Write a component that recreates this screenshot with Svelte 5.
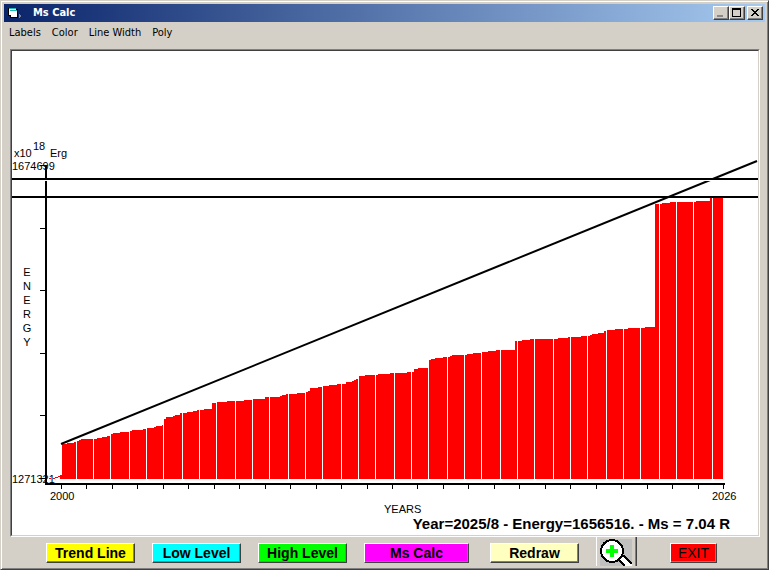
<script>
  const baseline = 479;

  /** Step outline of the bars: left edge and top of every level. */
  const levels = [
    [62, 444], [67, 443], [74, 442], [77, 441], [79, 440], [81, 439], [97, 438], [102, 437],
    [107, 436], [110, 434], [113, 433], [120, 432], [129, 431], [132, 430], [143, 429],
    [146, 428], [154, 427], [156, 426], [162, 425], [164, 419], [166, 417], [173, 416],
    [175, 415], [180, 413], [187, 412], [193, 411], [197, 410], [204, 409], [212, 403],
    [217, 402], [227, 401], [244, 400], [253, 399], [265, 397], [280, 396], [282, 395],
    [286, 394], [297, 393], [306, 392], [308, 391], [310, 388], [318, 387], [322, 386],
    [329, 385], [337, 384], [346, 382], [352, 381], [354, 380], [356, 379], [359, 376],
    [365, 375], [378, 374], [390, 373], [407, 372], [414, 369], [418, 368], [429, 360],
    [431, 359], [435, 358], [443, 357], [450, 356], [452, 355], [467, 354], [473, 353],
    [482, 352], [488, 351], [496, 350], [515, 341], [522, 340], [530, 339], [558, 338],
    [568, 337], [581, 336], [590, 335], [592, 334], [598, 333], [604, 331], [606, 330],
    [615, 329], [628, 328], [645, 327], [655, 204], [662, 203], [670, 202], [696, 201],
    [710, 197]
  ];
  const lastX = 723;

  const steps = levels.map(([x, y], i) => ({
    x,
    y,
    width: (levels[i + 1]?.[0] ?? lastX) - x
  }));

  const gaps = [];
  for (let x = 76; x < lastX; x += 53) {
    gaps.push(x, x + 17, x + 34);
  }

  const yearTicks = Array.from({ length: 27 }, (_, i) => Math.round(61 + (i * 662) / 26));
  const energyTicks = [165, 228, 290, 353, 415, 478];
  const menu = ['Labels', 'Color', 'Line Width', 'Poly'];
</script>

<main class="window">
  <header class="title-bar">
    <svg class="app-icon" viewBox="0 0 14 12" aria-hidden="true" shape-rendering="crispEdges">
      <path d="M0 1h8v1h2v9H2V9H0z" fill="#000" />
      <path d="M1 2h7v6H1z" fill="#fff" />
      <path d="M1 1h7v1H1z" fill="#20b8b0" />
      <path d="M2 4h7v6H3z" fill="#fff" />
      <path d="M2 3h7v1H2z" fill="#20b8b0" />
      <path d="M11 7l2 2-2 2z" fill="#78818c" />
    </svg>
    <h1>Ms Calc</h1>
    <div class="window-buttons">
      <button type="button" aria-label="Minimize">
        <svg viewBox="0 0 12 10"><path d="M2 7h6v2H2z" fill="#888" /></svg>
      </button>
      <button type="button" aria-label="Maximize">
        <svg viewBox="0 0 12 10"><path d="M1 0h9v9H1zM2 2v6h7V2z" fill-rule="evenodd" /></svg>
      </button>
      <button type="button" class="close" aria-label="Close">
        <svg viewBox="0 0 12 10">
          <path d="M2 1h2v1h1v1h2V2h1V1h2v1H9v1H8v1H7v1h1v1h1v1h1v1H8V7H7V6H5v1H4v1H2V7h1V6h1V5h1V4H4V3H3V2H2z" />
        </svg>
      </button>
    </div>
  </header>

  <nav class="menu">
    {#each menu as item}
      <button type="button">{item}</button>
    {/each}
  </nav>

  <div class="plot">
    <svg viewBox="12 51 746 484" role="img" aria-label="Energy by year">
      <g shape-rendering="crispEdges">
        <g class="bars">
          {#each steps as step}
            <rect x={step.x} y={step.y} width={step.width} height={baseline - step.y} />
          {/each}
          <path d="M49 478h2v1h-2zM53 478h2v1h-2zM55 477h3v1h-3zM58 476h2v1h-2zM60 475h2v4h-2z" />
        </g>
        {#each gaps as x}
          <rect class="gap" {x} y="190" width="1" height="289" />
        {/each}
        <path class="axis" d="M46 165V485M45 484H725" />
        {#each energyTicks as y}
          <rect x="40" {y} width="5" height="1" />
        {/each}
        {#each yearTicks as x}
          <rect {x} y="485" width="1" height="4" />
        {/each}
      </g>
      <path class="axis" d="M61 444L757 161" />
      <g shape-rendering="crispEdges">
        <rect class="gap" x="12" y="180" width="746" height="1" />
        <path class="axis" d="M12 179H758M12 197H758" />
      </g>
      <g class="small">
        <text x="14" y="157">x10</text>
        <text x="33" y="150">18</text>
        <text x="50" y="157">Erg</text>
        <text x="12" y="170">1674699</text>
        <text x="12" y="483">1271321</text>
        <text x="50" y="500">2000</text>
        <text x="712" y="500">2026</text>
        <text x="384" y="513">YEARS</text>
        {#each 'ENERGY' as letter, i}
          <text class="vertical" x="27" y={276 + i * 14}>{letter}</text>
        {/each}
      </g>
      <text class="reading" x="730" y="529">Year=2025/8 - Energy=1656516. - Ms = 7.04 R</text>
    </svg>
  </div>

  <footer class="toolbar">
    <button type="button" class="yellow">Trend Line</button>
    <button type="button" class="cyan">Low Level</button>
    <button type="button" class="green">High Level</button>
    <button type="button" class="magenta">Ms Calc</button>
    <button type="button" class="cream">Redraw</button>
    <button type="button" class="zoom" aria-label="Zoom in">
      <svg viewBox="0 0 32 27" shape-rendering="crispEdges">
        <path d="M0 0h32v27H0z" fill="#c0c0c0" />
        <path d="M17 20l6-4 9 9v2h-7z" fill="#fff" />
        <path d="M21 17h3l8 8M18 20l7 7" fill="none" stroke="#000" stroke-width="2" />
        <circle cx="12" cy="12" r="11" fill="#fff" stroke="#000" stroke-width="2" />
        <path d="M10 6h4v4h4v4h-4v4h-4v-4H6v-4h4z" fill="#0f0" />
      </svg>
    </button>
    <button type="button" class="exit">EXIT</button>
  </footer>
</main>

<style>
  :global(body) {
    margin: 0;
    background: #d4d0c8;
  }

  .window {
    padding: 3px;
    border: 1px solid;
    border-color: #d4d0c8 #404040 #404040 #d4d0c8;
    background: #d4d0c8;
    box-shadow: inset 1px 1px #fff, inset -1px -1px #808080;
    color: #000;
    font-family: "DejaVu Sans Condensed", "DejaVu Sans", sans-serif;
    font-size: 11px;
  }

  button {
    margin: 0;
    padding: 0;
    border: 1px solid;
    border-color: #fff #404040 #404040 #fff;
    border-radius: 0;
    background: #d4d0c8;
    color: #000;
    font: inherit;
  }

  .title-bar {
    display: flex;
    align-items: center;
    height: 18px;
    padding: 0 2px 0 4px;
    background: linear-gradient(to right, #0a246a, #a6caf0);
  }

  .app-icon {
    width: 14px;
    height: 12px;
  }

  h1 {
    flex: 1;
    margin: 0 0 0 11px;
    color: #fff;
    font-size: 11px;
    line-height: 18px;
  }

  .window-buttons {
    display: flex;
  }

  .window-buttons button {
    width: 16px;
    height: 14px;
    box-shadow: inset -1px -1px #808080;
  }

  .window-buttons .close {
    margin-left: 2px;
  }

  .window-buttons svg {
    display: block;
    width: 12px;
    height: 10px;
    margin: 1px;
    shape-rendering: crispEdges;
  }

  .menu {
    display: flex;
    gap: 11px;
    height: 22px;
    padding: 0 5px 5px;
  }

  .menu button {
    border: 0;
    line-height: 22px;
  }

  .plot {
    margin: 0 5px 0 6px;
    border: 1px solid;
    border-color: #808080 #fff #fff #808080;
  }

  .plot svg {
    display: block;
    width: 100%;
    box-sizing: border-box;
    border: 1px solid;
    border-color: #404040 #d4d0c8 #d4d0c8 #404040;
    background: #fff;
  }

  .bars {
    fill: #f00;
  }

  .gap {
    fill: #fff;
  }

  .axis {
    fill: none;
    stroke: #000;
    stroke-width: 2px;
  }

  .small {
    font-family: "Liberation Sans", Arial, sans-serif;
    font-size: 11px;
  }

  .vertical {
    text-anchor: middle;
  }

  .reading {
    font-family: "Liberation Sans", Arial, sans-serif;
    font-size: 15px;
    font-weight: bold;
    text-anchor: end;
  }

  .toolbar {
    display: flex;
    gap: 17px;
    height: 29px;
    padding-left: 42px;
    font-family: "Liberation Sans", Arial, sans-serif;
    font-size: 14px;
    font-weight: bold;
  }

  .toolbar button {
    width: 89px;
    height: 20px;
    margin-top: 6px;
    box-shadow: inset -1px -1px #808080;
    line-height: 18px;
  }

  .toolbar .yellow {
    background: #ff0;
  }

  .toolbar .cyan {
    background: #0ff;
  }

  .toolbar .green {
    background: #0f0;
  }

  .toolbar .magenta {
    width: 105px;
    background: #f0f;
  }

  .toolbar .cream {
    margin-left: 4px;
    background: #ffffc0;
  }

  .toolbar .zoom {
    width: 41px;
    height: 29px;
    margin-top: 0;
    border-top: 0;
    border-bottom: 0;
    box-shadow: inset -1px 0 #808080;
  }

  .zoom svg {
    display: block;
    width: 32px;
    height: 27px;
    margin: 2px 0 0 3px;
  }

  .toolbar .exit {
    width: 47px;
    margin-left: 16px;
    background: #f00;
    font-weight: normal;
  }
</style>
